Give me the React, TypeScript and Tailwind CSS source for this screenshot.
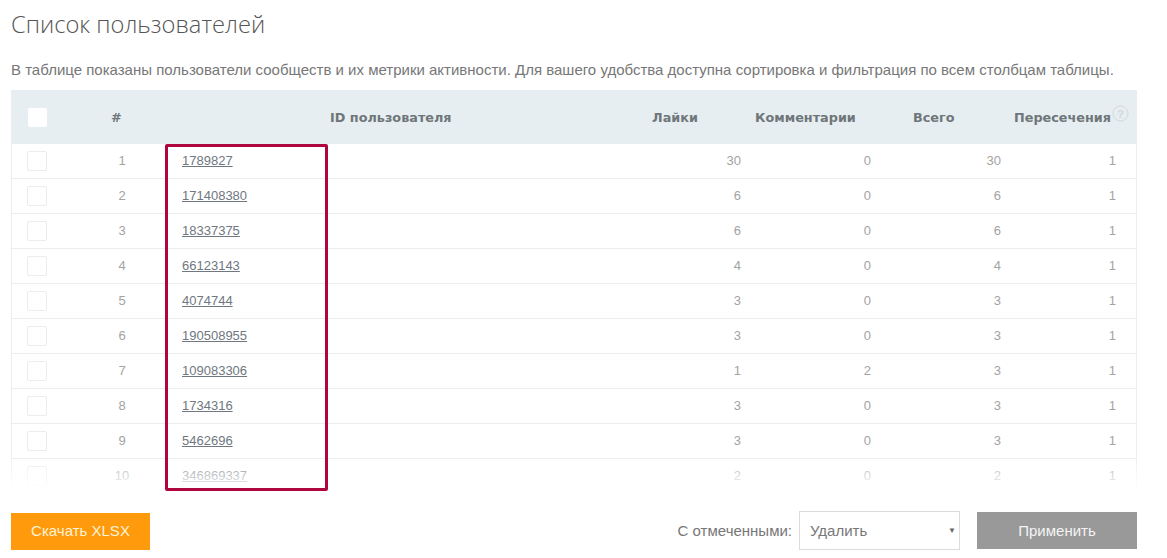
const rows = [
  { n: 1, id: "1789827", likes: 30, comments: 0, total: 30, cross: 1 },
  { n: 2, id: "171408380", likes: 6, comments: 0, total: 6, cross: 1 },
  { n: 3, id: "18337375", likes: 6, comments: 0, total: 6, cross: 1 },
  { n: 4, id: "66123143", likes: 4, comments: 0, total: 4, cross: 1 },
  { n: 5, id: "4074744", likes: 3, comments: 0, total: 3, cross: 1 },
  { n: 6, id: "190508955", likes: 3, comments: 0, total: 3, cross: 1 },
  { n: 7, id: "109083306", likes: 1, comments: 2, total: 3, cross: 1 },
  { n: 8, id: "1734316", likes: 3, comments: 0, total: 3, cross: 1 },
  { n: 9, id: "5462696", likes: 3, comments: 0, total: 3, cross: 1 },
  { n: 10, id: "346869337", likes: 2, comments: 0, total: 2, cross: 1 },
]

const cols = "grid grid-cols-[70px_82px_448px_130px_130px_130px_115px]"

function HelpIcon() {
  return (
    <svg width="17" height="17" viewBox="0 0 17 17" fill="none" className="absolute left-[1101px] top-[15px]">
      <circle cx="8.5" cy="8.5" r="7.5" stroke="#d3d8da" strokeWidth="1" />
      <text x="8.5" y="12.5" textAnchor="middle" fontSize="11" fill="#d3d8da" fontFamily="Liberation Sans, sans-serif">?</text>
    </svg>
  )
}

export default function App() {
  return (
    <div className="w-[1167px] h-[558px] bg-white overflow-hidden font-['Liberation_Sans',sans-serif] text-[#a3a3a3]">
      <div className="px-[11px] w-[1148px]">
        <h1 className="pt-[9px] h-[45px] text-[23.7px] leading-[30px] font-light text-[#555] font-['Open_Sans',sans-serif]">Список пользователей</h1>
        <p className="mt-[15px] h-[30px] text-[15px] leading-[20px] text-[#777] whitespace-nowrap">
          В таблице показаны пользователи сообществ и их метрики активности. Для вашего удобства доступна сортировка и фильтрация по всем столбцам таблицы.
        </p>
        <div className="relative w-[1126px] h-[401px]">
          <div className="h-[398px] overflow-hidden">
            <div className={`${cols} relative h-[54px] items-center bg-[#e6eef1] font-['DejaVu_Sans',sans-serif] font-bold text-[12.8px] text-[#6f7679]`}>
              <div className="pl-[17px]"><div className="w-[19px] h-[19px] bg-white rounded-[2px]" /></div>
              <div className="pl-[30px] pt-[1px]">#</div>
              <div className="pl-[167px] pt-[1px]">ID пользователя</div>
              <div className="pl-[41px] pt-[1px]">Лайки</div>
              <div className="pl-[14px] pt-[1px]">Комментарии</div>
              <div className="pl-[42px] pt-[1px]">Всего</div>
              <div className="pl-[13px] pt-[1px]">Пересечения</div>
              <HelpIcon />
            </div>
            <div className="border-x border-[#eeeeee]">
              {rows.map((r) => (
                <div key={r.n} className={`${cols} -mx-px h-[35px] items-center border-b border-[#ececec] text-[13px]`}>
                  <div className="pl-[16px]"><div className="w-[20px] h-[20px] border border-[#ececec] rounded-[2px]" /></div>
                  <div className="text-center">{r.n}</div>
                  <div className="pl-[19px]"><a className="underline text-[#6f7780]">{r.id}</a></div>
                  <div className="text-right">{r.likes}</div>
                  <div className="text-right">{r.comments}</div>
                  <div className="text-right">{r.total}</div>
                  <div className="text-right">{r.cross}</div>
                </div>
              ))}
            </div>
          </div>
          <div className="absolute left-0 right-0 top-[365px] h-[35px] bg-gradient-to-b from-white/0 to-white" />
          <div className="absolute left-[154px] top-[54px] w-[163px] h-[347px] border-[3px] border-[#b0063f] rounded-[2px]" />
        </div>
        <div className="mt-[20px] flex items-center h-[39px]">
          <button className="self-end w-[139px] h-[37px] bg-[#ff9a0d] text-[#fff3d6] text-[15px]">Скачать XLSX</button>
          <div className="ml-auto flex items-center">
            <span className="pt-[1px] text-[15px] text-[#777] mr-[7px]">С отмеченными:</span>
            <div className="relative w-[161px] h-[39px] border border-[#dcdcdc] flex items-center pl-[10px] pt-[1px] text-[15px] text-[#777]">
              Удалить
              <span className="absolute right-[3px] top-[13px] text-[8px] text-[#666]">▼</span>
            </div>
            <button className="ml-[17px] w-[160px] h-[37px] pt-[1px] bg-[#999999] text-[#f4f4f4] text-[15px]">Применить</button>
          </div>
        </div>
      </div>
    </div>
  )
}
